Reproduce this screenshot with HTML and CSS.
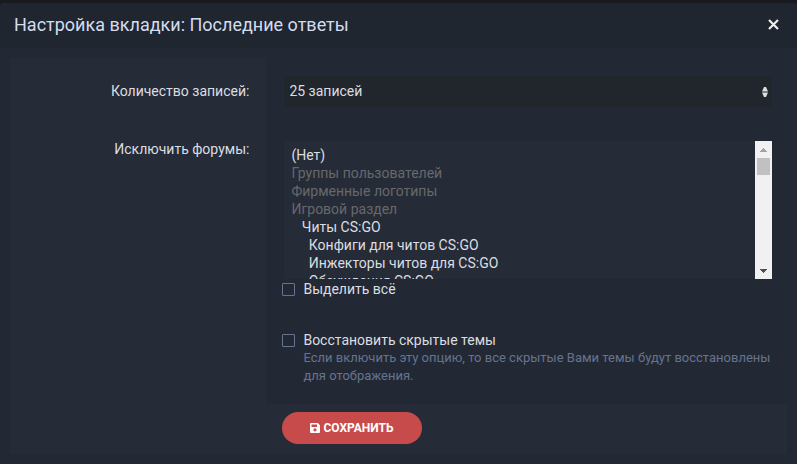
FILE: index.html
```html
<!DOCTYPE html>
<html lang="ru">
<head>
    <meta charset="UTF-8">
    <meta name="viewport" content="width=device-width, initial-scale=1.0">
    <title>Настройка вкладки: Последние ответы</title>
    <link rel="stylesheet" href="styles.css">
</head>
<body>
    <div class="overlay">
        <div class="overlay-header">
            <h1 class="overlay-title">Настройка вкладки: Последние ответы</h1>
            <button class="overlay-close" type="button" aria-label="Закрыть">
                <svg width="11" height="11" viewBox="0 0 11 11"><path d="M1 1L10 10M10 1L1 10" stroke="currentColor" stroke-width="2.2" fill="none"/></svg>
            </button>
        </div>

        <form class="overlay-content" action="">
            <div class="row row-first">
                <div class="row-label"><label for="limit">Количество записей:</label></div>
                <div class="row-field">
                    <select class="input select" name="limit" id="limit">
                        <option>5 записей</option>
                        <option>10 записей</option>
                        <option selected>25 записей</option>
                        <option>50 записей</option>
                    </select>
                </div>
            </div>

            <div class="row">
                <div class="row-label"><label for="forums">Исключить форумы:</label></div>
                <div class="row-field">
                    <div class="listbox-wrap">
                        <select class="input listbox" name="forums" id="forums" multiple size="7">
                            <option>(Нет)</option>
                            <option disabled>Группы пользователей</option>
                            <option disabled>Фирменные логотипы</option>
                            <option disabled>Игровой раздел</option>
                            <option>&nbsp;&nbsp;&nbsp;Читы CS:GO</option>
                            <option>&nbsp;&nbsp;&nbsp;&nbsp;&nbsp;Конфиги для читов CS:GO</option>
                            <option>&nbsp;&nbsp;&nbsp;&nbsp;&nbsp;Инжекторы читов для CS:GO</option>
                            <option>&nbsp;&nbsp;&nbsp;&nbsp;&nbsp;Обсуждения CS:GO</option>
                        </select>
                        <div class="scrollbar">
                            <button class="scroll-button" type="button" id="scrollUp" aria-label="Вверх" disabled>
                                <svg width="7" height="4" viewBox="0 0 7 4"><path fill="currentColor" d="M0 4V3H1V2H2V1H3V0H4V1H5V2H6V3H7V4Z"/></svg>
                            </button>
                            <div class="scroll-track"><div class="scroll-thumb" id="thumb"></div></div>
                            <button class="scroll-button" type="button" id="scrollDown" aria-label="Вниз">
                                <svg width="7" height="4" viewBox="0 0 7 4"><path fill="currentColor" d="M0 0V1H1V2H2V3H3V4H4V3H5V2H6V1H7V0Z"/></svg>
                            </button>
                        </div>
                    </div>
                    <label class="check"><input type="checkbox" id="selectAll">Выделить всё</label>
                </div>
            </div>

            <div class="row row-last">
                <div class="row-label"></div>
                <div class="row-field">
                    <label class="check"><input type="checkbox" name="restore" aria-describedby="restoreHint">Восстановить скрытые темы</label>
                    <p class="hint" id="restoreHint">Если включить эту опцию, то все скрытые Вами темы будут восстановлены для отображения.</p>
                </div>
            </div>

            <div class="row row-submit">
                <div class="row-label"></div>
                <div class="row-field">
                    <button class="button" type="submit">
                        <svg width="10" height="10" viewBox="0 0 10 10"><path fill="currentColor" fill-rule="evenodd" d="M1 0H7.8L10 2.2V9Q10 10 9 10H1Q0 10 0 9V1Q0 0 1 0ZM1.5 1.5V4H7V1.5ZM5 5.2A1.6 1.6 0 1 0 5 8.4A1.6 1.6 0 1 0 5 5.2Z"/></svg>
                        Сохранить
                    </button>
                </div>
            </div>
        </form>
    </div>

    <script>
        var forums = document.getElementById("forums");
        var thumb = document.getElementById("thumb");
        var up = document.getElementById("scrollUp");
        var down = document.getElementById("scrollDown");

        // остальные разделы форума
        for (var i = 1; i <= 39; i++) {
            forums.add(new Option("\u00a0\u00a0\u00a0Раздел " + i));
        }

        // ползунок следует за прокруткой списка
        forums.onscroll = function () {
            var max = forums.scrollHeight - forums.clientHeight;
            var free = thumb.parentNode.clientHeight - thumb.clientHeight;
            thumb.style.marginTop = forums.scrollTop / max * free + "px";
            up.disabled = forums.scrollTop <= 0;
            down.disabled = forums.scrollTop >= max;
        };
        up.onclick = function () {
            forums.scrollTop -= 36;
        };
        down.onclick = function () {
            forums.scrollTop += 36;
        };

        document.getElementById("selectAll").onchange = function () {
            for (var option of forums.options) {
                option.selected = this.checked && !option.disabled;
            }
        };
    </script>
</body>
</html>
```
FILE: styles.css
```css
* {
    box-sizing: border-box;
}
body {
    margin: 0;
    padding-top: 3px;
    background-color: #181a20;
    font-family: Roboto, "Liberation Sans", sans-serif;
    font-size: 14px;
    line-height: 18px;
    color: #dcdde1;
}
.overlay {
    min-height: calc(100vh - 3px);
    background-color: #232934;
    border-radius: 4px 4px 0 0;
}
.overlay-header {
    display: flex;
    align-items: center;
    justify-content: space-between;
    height: 45px;
    padding: 0 15px 2px 14px;
    background-color: #20262f;
    border-radius: 4px 4px 0 0;
}
.overlay-title {
    margin: 0;
    font-size: 18px;
    font-weight: 400;
    line-height: 24px;
    color: #d3dcf0;
}
.overlay-close {
    display: flex;
    padding: 3px;
    border: none;
    background: none;
    color: #eeeeee;
    cursor: pointer;
}
.overlay-content {
    padding: 10px;
}

/* строки формы */
.row {
    display: flex;
}
.row-label {
    width: 33%;
    padding: 16px 17px 16px 15px;
    background-color: #262c37;
    text-align: right;
}
.row-field {
    flex: 1;
    min-width: 0;
    padding: 17px 15px 16px 16px;
}
.row-first .row-label {
    padding-top: 24px;
}
.row-first .row-field {
    padding-top: 18px;
    padding-bottom: 17px;
}
.row-last .row-field {
    padding-top: 16px;
    padding-bottom: 19px;
}
.row-submit {
    background-color: #262c37;
}
.row-submit .row-field {
    padding-top: 8px;
    padding-bottom: 10px;
}

.input {
    display: block;
    border: none;
    border-radius: 4px;
    outline: none;
    font-family: inherit;
    font-size: 14px;
    color: #dcdde1;
}
.select {
    width: calc(100% - 2px);
    height: 31px;
    margin-left: 2px;
    padding: 0 20px 1px 5px;
    appearance: none;
    background: #20262c url("data:image/svg+xml,%3Csvg xmlns='http://www.w3.org/2000/svg' width='6' height='10'%3E%3Cpath fill='%23dddddd' d='M0 4.4L2 0H4L6 4.4ZM0 5.6H6L4 10H2Z'/%3E%3C/svg%3E") no-repeat right 4px center;
}
.listbox-wrap {
    display: flex;
    height: 138px;
    margin-left: 2px;
}
.listbox {
    flex: 1;
    min-width: 0;
    height: 100%;
    padding: 6px 0 0 5px;
    border-radius: 0;
    background-color: #262c37;
    overflow-y: scroll;
    scrollbar-width: none;
}
.listbox option {
    min-height: 18px;
    padding: 0 2px;
    line-height: 18px;
}
.listbox option:disabled {
    color: #66686c;
}

/* полоса прокрутки */
.scrollbar {
    display: flex;
    flex-direction: column;
    width: 17px;
    background-color: #f1f1f1;
}
.scroll-button {
    display: flex;
    align-items: center;
    justify-content: center;
    height: 17px;
    padding: 0;
    border: none;
    background: none;
    color: #505050;
}
.scroll-button:disabled {
    color: #a3a3a3;
}
.scroll-track {
    flex: 1;
    display: flow-root;
    padding: 0 2px;
}
.scroll-thumb {
    height: 17px;
    background-color: #c1c1c1;
}

.check {
    display: flex;
    align-items: center;
    gap: 8px;
    margin-top: 1px;
}
.check input {
    appearance: none;
    width: 13px;
    height: 13px;
    margin: 0;
    border: 1px solid #66758f;
    border-radius: 1px;
}
.check input:checked {
    background-color: #66758f;
}
.hint {
    margin: 0;
    padding-left: 21px;
    font-size: 13px;
    color: #66738f;
}

.button {
    display: inline-flex;
    align-items: center;
    justify-content: center;
    gap: 3px;
    height: 32px;
    padding: 0 28px;
    border: none;
    border-radius: 16px;
    background-color: #c84b4b;
    font-family: inherit;
    font-size: 12px;
    font-weight: 700;
    text-transform: uppercase;
    color: #ffffff;
    cursor: pointer;
}
```
